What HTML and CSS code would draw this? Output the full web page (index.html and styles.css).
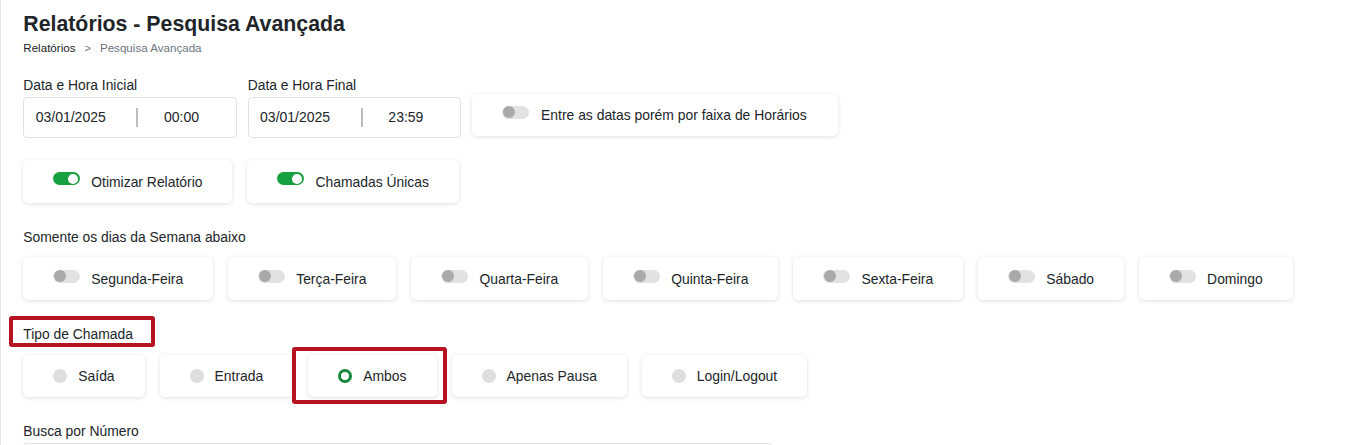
FILE: index.html
```html
<!DOCTYPE html>
<html lang="pt-BR">
<head>
<meta charset="utf-8">
<title>Relatórios - Pesquisa Avançada</title>
<link rel="stylesheet" href="styles.css">
</head>
<body>
<div class="page">
  <h1 class="title">Relatórios - Pesquisa Avançada</h1>
  <nav class="crumbs">
    <span class="crumb">Relatórios</span>
    <span class="sep">&gt;</span>
    <span class="crumb current">Pesquisa Avançada</span>
  </nav>

  <div class="row row-dates">
    <div class="field">
      <div class="label">Data e Hora Inicial</div>
      <div class="dt-input">
        <span class="dt-date">03/01/2025</span>
        <span class="dt-div"></span>
        <span class="dt-time">00:00</span>
      </div>
    </div>
    <div class="field">
      <div class="label">Data e Hora Final</div>
      <div class="dt-input">
        <span class="dt-date">03/01/2025</span>
        <span class="dt-div"></span>
        <span class="dt-time">23:59</span>
      </div>
    </div>
    <div class="card card-range">
      <span class="switch"></span>
      <span class="card-text">Entre as datas porém por faixa de Horários</span>
    </div>
  </div>

  <div class="row row-opts">
    <div class="card"><span class="switch on"></span><span class="card-text">Otimizar Relatório</span></div>
    <div class="card"><span class="switch on"></span><span class="card-text">Chamadas Únicas</span></div>
  </div>

  <div class="label section-label">Somente os dias da Semana abaixo</div>
  <div class="row row-cards">
    <div class="card"><span class="switch"></span><span class="card-text">Segunda-Feira</span></div>
    <div class="card"><span class="switch"></span><span class="card-text">Terça-Feira</span></div>
    <div class="card"><span class="switch"></span><span class="card-text">Quarta-Feira</span></div>
    <div class="card"><span class="switch"></span><span class="card-text">Quinta-Feira</span></div>
    <div class="card"><span class="switch"></span><span class="card-text">Sexta-Feira</span></div>
    <div class="card"><span class="switch"></span><span class="card-text">Sábado</span></div>
    <div class="card"><span class="switch"></span><span class="card-text">Domingo</span></div>
  </div>

  <div class="label section-label highlight-wrap">
    Tipo de Chamada
    <span class="mark mark-label"></span>
  </div>
  <div class="row row-cards">
    <div class="card"><span class="radio"></span><span class="card-text">Saída</span></div>
    <div class="card"><span class="radio"></span><span class="card-text">Entrada</span></div>
    <div class="card highlight-wrap"><span class="radio checked"></span><span class="card-text">Ambos</span><span class="mark mark-card"></span></div>
    <div class="card"><span class="radio"></span><span class="card-text">Apenas Pausa</span></div>
    <div class="card"><span class="radio"></span><span class="card-text">Login/Logout</span></div>
  </div>

  <div class="label section-label">Busca por Número</div>
  <div class="text-input"></div>
</div>
</body>
</html>
```
FILE: styles.css
```css
* { box-sizing: border-box; }

html, body {
  margin: 0;
  padding: 0;
  background: #fff;
}

body {
  font-family: "Liberation Sans", Arial, sans-serif;
  color: #212529;
  font-size: 14px;
}

.page {
  height: 445px;
  overflow: hidden;
  border-left: 1px solid #e4e4e4;
  padding: 12.3px 0 0 22.3px;
}

.title {
  margin: 0;
  font-size: 21.3px;
  line-height: 24px;
  font-weight: 700;
  color: #212529;
}

.crumbs {
  margin-top: 5.2px;
  font-size: 11.6px;
  line-height: 14px;
  display: flex;
  align-items: baseline;
}

.crumb { color: #212529; }
.crumb.current { color: #6c757d; }
.sep { color: #6c757d; margin: 0 9px 0 9px; font-size: 11px; }

.label {
  font-size: 13.85px;
  line-height: 16px;
  color: #212529;
}

.row {
  display: flex;
  align-items: flex-start;
}

.row-dates {
  margin-top: 21.6px;
  gap: 11px;
  align-items: flex-end;
}

.field .label { margin-bottom: 3.5px; }

.dt-input {
  width: 213.4px;
  height: 41.6px;
  border: 1px solid #dee2e6;
  border-radius: 4px;
  display: flex;
  align-items: center;
  padding-left: 11.4px;
  background: #fff;
}

.dt-date { width: 100.6px; }

.dt-div {
  width: 2px;
  height: 19px;
  background: #bdbdbd;
}

.dt-time { margin-left: 25.7px; }

.card {
  display: inline-flex;
  align-items: center;
  gap: 11px;
  height: 42.7px;
  padding: 0 30px;
  background: #fff;
  border-radius: 5px;
  box-shadow: 0 1px 4px rgba(0, 0, 0, 0.13);
  white-space: nowrap;
}

.card-text { font-size: 13.9px; padding-top: 1px; }

.card-range {
  height: 42px;
  margin-bottom: 2.3px;
  padding-right: 31px;
  gap: 12px;
}

.row-opts {
  margin-top: 21.7px;
  gap: 15px;
}

.row-cards {
  margin-top: 12.5px;
  gap: 15px;
}

.section-label { margin-top: 26.2px; }

.switch {
  position: relative;
  flex: none;
  width: 27px;
  height: 13px;
  border-radius: 7px;
  background: #e2e2e2;
  margin-bottom: 5px;
}

.switch::after {
  content: "";
  position: absolute;
  left: 0.5px;
  top: 0.5px;
  width: 12px;
  height: 12px;
  border-radius: 50%;
  background: #a9a9a9;
}

.switch.on { background: #17a03f; }
.switch.on::after {
  left: auto;
  right: 2px;
  top: 1.5px;
  width: 10px;
  height: 10px;
  background: #fff;
}

.radio {
  flex: none;
  width: 14px;
  height: 14px;
  border-radius: 50%;
  background: #dedede;
}

.radio.checked {
  background: #fff;
  border: 3.6px solid #15883c;
}

.highlight-wrap { position: relative; }

.mark {
  position: absolute;
  border: 4.5px solid #b51322;
  border-radius: 3px;
  pointer-events: none;
}

.mark-label {
  left: -14.3px;
  top: -10.5px;
  width: 146.3px;
  height: 31.3px;
}

.card .mark-card {
  left: -16px;
  top: -7.7px;
  width: 154.7px;
  height: 57px;
}

.text-input {
  margin-top: 3.5px;
  width: 749px;
  height: 42px;
  flex: none;
  border: 1px solid #dee2e6;
  border-radius: 4px;
}
```
